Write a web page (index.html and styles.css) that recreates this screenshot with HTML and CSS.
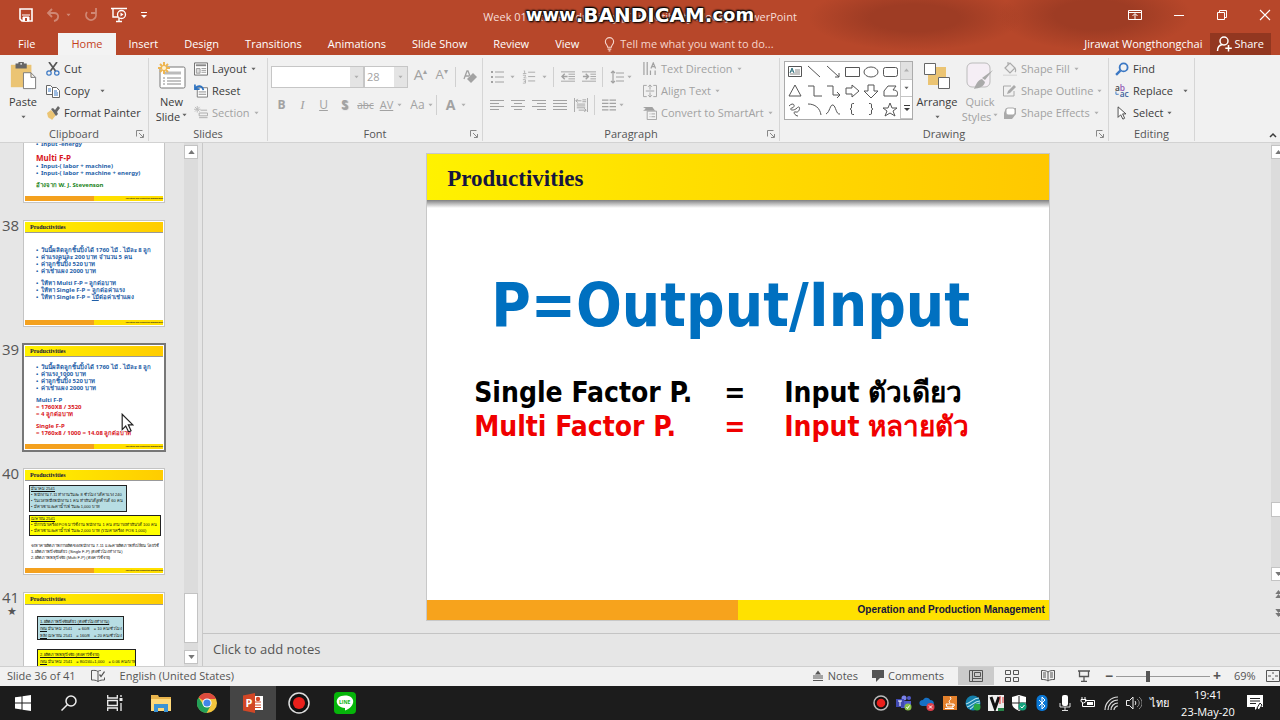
FILE: index.html
```html
<!DOCTYPE html>
<html lang="en">
<head>
<meta charset="utf-8">
<title>Presentation editor</title>
<link rel="stylesheet" href="styles.css">
</head>
<body>
<svg class="sprite" aria-hidden="true">
  <symbol id="caret" viewBox="0 0 6 4"><path d="M.5.5h5L3 3.5z" fill="currentColor"/></symbol>
  <symbol id="launch" viewBox="0 0 8 8"><path d="M.5 6.500V.5h6M3 3l4 4M7.500 4v3.500H4" fill="none" stroke="currentColor"/></symbol>
  <symbol id="save" viewBox="0 0 14 14"><path d="M1 1h12v12H3l-2-2z" fill="none" stroke="currentColor" stroke-width="1.600"/><path d="M3 7h8M4 9h6v4H4z" fill="currentColor" stroke="currentColor"/><path d="M6 10h2v3H6z" fill="#b7472a"/></symbol>
  <symbol id="undo" viewBox="0 0 14 14"><path d="M6 1 2 5l4 4M2 5h6c6 0 5 7 0 8" fill="none" stroke="currentColor" stroke-width="1.800"/></symbol>
  <symbol id="redo" viewBox="0 0 14 14"><path d="M3 4a5 5 0 1 0 8 0M7 5h5V0" fill="none" stroke="currentColor" stroke-width="1.800"/></symbol>
  <symbol id="present" viewBox="0 0 16 16"><path d="M0 1.500h16M2 2v8h5M5 14.500h6M8 11v3" fill="none" stroke="currentColor" stroke-width="1.400"/><circle cx="10.500" cy="7.500" r="4" fill="none" stroke="currentColor" stroke-width="1.300"/><path d="M9.500 5.500v4l3-2z" fill="currentColor"/></symbol>
  <symbol id="qat" viewBox="0 0 8 8"><path d="M1 1.500h6" stroke="currentColor"/><path d="M1 4h6L4 7z" fill="currentColor"/></symbol>
  <symbol id="ribbonopt" viewBox="0 0 14 12"><path d="M.5 1.500h13v9H.5zM.5 3.500h13M7 10V5M4.500 7 7 4.500 9.500 7" fill="none" stroke="currentColor"/></symbol>
  <symbol id="min" viewBox="0 0 12 12"><path d="M1 6.500h10" stroke="currentColor"/></symbol>
  <symbol id="restore" viewBox="0 0 12 12"><path d="M1.500 3.500h7v7h-7zM3.500 3V1.500h7v7H9" fill="none" stroke="currentColor"/></symbol>
  <symbol id="close" viewBox="0 0 12 12"><path d="m1 1 10 10M11 1 1 11" stroke="currentColor" stroke-width="1.100"/></symbol>
  <symbol id="bulb" viewBox="0 0 12 16"><path d="M4 11C4 8.500 1.500 8 1.500 5a4.500 4.500 0 0 1 9 0c0 3-2.500 3.500-2.500 6zM4 13h4M5 15h2" fill="none" stroke="currentColor" stroke-width="1.200"/></symbol>
  <symbol id="person" viewBox="0 0 16 16"><circle cx="8" cy="5" r="4" fill="none" stroke="currentColor" stroke-width="1.500"/><path d="M1.500 15c0-4 2-6 5-6.500M12.500 9v6.500M9.300 12.300h6.500" fill="none" stroke="currentColor" stroke-width="1.500"/></symbol>
  <symbol id="paste" viewBox="0 0 28 30"><path d="M1 3h22v24H1z" fill="#ebc473"/><path d="M6 1.500h3a3 3 0 0 1 6 0h3V7H6z" fill="#666"/><circle cx="12" cy="2" r="1" fill="#eee"/><path d="M14.500 11.500h8l5 5v12h-13zM22.500 11.500v5h5" fill="#fff" stroke="#777"/></symbol>
  <symbol id="cut" viewBox="0 0 14 14"><path d="m3 0 6.500 9M11 0 4.500 9" stroke="#555" stroke-width="1.700"/><circle cx="3" cy="11" r="2.200" fill="none" stroke="#3b78c4" stroke-width="1.200"/><circle cx="10.800" cy="11" r="2.200" fill="none" stroke="#3b78c4" stroke-width="1.200"/></symbol>
  <symbol id="copy" viewBox="0 0 14 14"><path d="M.5 1.500h4l2 2v7h-6zM6.500 3.500h4l3 3v7h-7z" fill="#fff" stroke="#666"/><path d="M2 5h3M2 7h3M8 7h3M8 9h4M8 11h4" stroke="#3b78c4"/></symbol>
  <symbol id="brush" viewBox="0 0 14 14"><path d="M1 7l4-3 5 5-4 5c-1-2-3-1-4-3z" fill="#ebc473"/><path d="m5 3 2-1 2 2 3-4 2 2-3 4 1 2-2 2z" fill="#666"/></symbol>
  <symbol id="newslide" viewBox="0 0 28 28"><rect x="2" y="5" width="25" height="21" rx="1.500" fill="#fff" stroke="#777"/><path d="M6 11h17" stroke="#bbb" stroke-width="3"/><path d="M5 16h2M9 16h14M5 19h2M9 19h14M5 22h2M9 22h14" stroke="#888"/><path d="M6 0v12M0 6h12M2 2l8 8M10 2l-8 8" stroke="#eeb550" stroke-width="2"/><circle cx="6" cy="6" r="2" fill="#fff3d2"/></symbol>
  <symbol id="layout" viewBox="0 0 15 14"><path d="M.5.5h14v13H.5z" fill="#fff" stroke="#666"/><path d="M2 3h11" stroke="#888" stroke-width="2"/><path d="M2.500 6.500h4v5h-4zM8 6.500h5M8 8.500h5M8 10.500h5" fill="#ddd" stroke="#999"/></symbol>
  <symbol id="reset" viewBox="0 0 15 14"><path d="M3.500 3.500h11v10h-11z" fill="#fff" stroke="#777"/><path d="M5 8h8M5 10.500h8" stroke="#888"/><path d="M1 0v5h5M1 5c3-5 8-4 9 1" fill="none" stroke="#2d72c0" stroke-width="1.800"/></symbol>
  <symbol id="section" viewBox="0 0 15 15"><path d="M3.500 0v7M0 3.500h7M1 1l5 5M6 1 1 6" stroke="#bbb"/><path d="M7 4.500h7M5.500 7.500h9v3h-9zM5.500 12.500h9" fill="none" stroke="#aaa"/></symbol>
  <symbol id="bullets" viewBox="0 0 14 14"><path d="M1 2h2M1 7h2M1 12h2" stroke="currentColor" stroke-width="2"/><path d="M5 2h9M5 7h9M5 12h9" stroke="currentColor"/></symbol>
  <symbol id="numbers" viewBox="0 0 14 16"><path d="M1 1h1v3M0 4h4M0 6h3v1L1 9h3M0 11h3v4H0M1 13h2" fill="none" stroke="currentColor" stroke-width=".8"/><path d="M6 2.500h8M6 7.500h8M6 12.500h8" stroke="currentColor"/></symbol>
  <symbol id="dedent" viewBox="0 0 15 13"><path d="M0 1h15M8 3.500h7M8 6h7M8 8.500h7M0 11h15" stroke="currentColor"/><path d="M1 6h6M4 3 1 6l3 3" fill="none" stroke="currentColor" stroke-width="1.500"/></symbol>
  <symbol id="indent" viewBox="0 0 15 13"><path d="M0 1h15M9 3.500h6M9 6h6M9 8.500h6M0 11h15" stroke="currentColor"/><path d="M1 6h6M4 3l3 3-3 3" fill="none" stroke="currentColor" stroke-width="1.500"/></symbol>
  <symbol id="spacing" viewBox="0 0 14 14"><path d="M3 1v12M1 3l2-2 2 2M1 11l2 2 2-2" fill="none" stroke="currentColor" stroke-width="1.200"/><path d="M6 3h8M6 7h8M6 11h8" stroke="currentColor"/></symbol>
  <symbol id="al" viewBox="0 0 14 12"><path d="M0 1.500h14M0 4.500h9M0 7.500h14M0 10.500h9" stroke="currentColor"/></symbol>
  <symbol id="ac" viewBox="0 0 14 12"><path d="M0 1.500h14M3 4.500h8M0 7.500h14M3 10.500h8" stroke="currentColor"/></symbol>
  <symbol id="ar" viewBox="0 0 14 12"><path d="M0 1.500h14M5 4.500h9M0 7.500h14M5 10.500h9" stroke="currentColor"/></symbol>
  <symbol id="aj" viewBox="0 0 14 12"><path d="M0 1.500h14M0 4.500h14M0 7.500h14M0 10.500h14" stroke="currentColor"/></symbol>
  <symbol id="dist" viewBox="0 0 15 15"><path d="M.5 0v15M14.500 0v15M2 3h6M4 1 2 3l2 2M9 2h4M9 4h4M3 6.500h9M3 8.500h9M3 10.500h9M5 13h8M11 11l2 2-2 2" fill="none" stroke="currentColor"/></symbol>
  <symbol id="cols" viewBox="0 0 13 12"><path d="M0 1.500h6M0 4.500h6M0 7.500h6M0 10.500h6M7 1.500h6M7 4.500h6M7 7.500h6M7 10.500h6" stroke="currentColor"/></symbol>
  <symbol id="tdir" viewBox="0 0 15 15"><path d="M1 0v14M4.500 0v14M8 9v5M13 9v5M8.500 7 11 1l2.500 6M9.500 5h3" fill="none" stroke="currentColor" stroke-width="1.300"/></symbol>
  <symbol id="atext" viewBox="0 0 15 15"><path d="M4 1.500H.5v12H4M11 1.500h3.500v12H11M3 7.500h9M7.500 1v5M5.500 3l2-2 2 2M7.500 9v5M5.500 12l2 2 2-2" fill="none" stroke="currentColor"/></symbol>
  <symbol id="smart" viewBox="0 0 15 15"><path d="M0 1h10l3 4H0l3-2z" fill="currentColor"/><path d="M4.500 5.500h10v9h-10zM7 8.500h1M9 8.500h4M7 11.500h1M9 11.500h4" fill="#f3f3f3" stroke="currentColor"/></symbol>
  <symbol id="eraser" viewBox="0 0 14 14"><path d="M1 9 4 1h1l2 5M2 6h4" fill="none" stroke="currentColor" stroke-width="1.300"/><path d="m4 9 6-6 4 4-6 6z" fill="currentColor"/></symbol>
  <symbol id="arrange" viewBox="0 0 26 26"><path d="M12 4h10v10H12zM4 12h10v10H4z" fill="#ebc473"/><path d="M.5.5h11v11H.500zM14.500 14.500h11v11h-11z" fill="#fff" stroke="#666"/></symbol>
  <symbol id="quick" viewBox="0 0 28 28"><rect x="1" y="1" width="23" height="24" rx="5" fill="#f5eef5" stroke="#bbb"/><path d="m27 8-8 10-3-2zM8 27c2-5 4-9 8-10l3 3c-1 5-6 6-11 7z" fill="#aaa"/></symbol>
  <symbol id="fill" viewBox="0 0 14 14"><path d="M0 13.500h14" stroke="#ddd" stroke-width="2"/><path d="M2 6 7 1l5 5-5 5zM5 4V0M12 6c1 2 1 3 0 4" fill="#eee" stroke="#aaa" stroke-width="1.200"/></symbol>
  <symbol id="outline" viewBox="0 0 14 14"><path d="M8 2H.5v10H11V7" fill="none" stroke="#aaa"/><path d="m4 10 1-3 6-6 2 2-6 6z" fill="#aaa"/></symbol>
  <symbol id="effects" viewBox="0 0 14 14"><path d="M3 2h10v6l-4 5H1V7z" fill="#aaa"/><rect x="3" y="2" width="9" height="7" rx="2" fill="#fff" stroke="#aaa"/></symbol>
  <symbol id="find" viewBox="0 0 13 13"><circle cx="8" cy="5" r="3.700" fill="none" stroke="#3b78c4" stroke-width="1.700"/><path d="m5 8-4 4" stroke="#3b78c4" stroke-width="2.200"/></symbol>
  <symbol id="replace" viewBox="0 0 15 15"><text x="0" y="7" font-size="9" font-weight="600" fill="#444">a</text><text x="5" y="7" font-size="9" font-weight="600" fill="#9159b5">b</text><text x="5" y="14" font-size="9" font-weight="600" fill="#3b5f9c">ac</text><path d="M1 8v3h3" fill="none" stroke="#3b78c4"/></symbol>
  <symbol id="pointer" viewBox="0 0 11 16"><path d="M1 1v12l3-3 2.500 5 2-1-2.300-5H10z" fill="#fff" stroke="currentColor"/></symbol>
  <symbol id="up" viewBox="0 0 8 5"><path d="M0 5h8L4 0z" fill="currentColor"/></symbol>
  <symbol id="down" viewBox="0 0 8 5"><path d="M0 0h8L4 5z" fill="currentColor"/></symbol>
  <symbol id="chev" viewBox="0 0 8 6"><path d="m1 5 3-3 3 3" fill="none" stroke="currentColor" stroke-width="1.500"/></symbol>
  <symbol id="book" viewBox="0 0 14 13"><path d="M7 2C5 .5 3 1 .5 1v9.500C3 10.500 5 10.500 7 12V2c1-1 2-1 3-1M7 12c2-1.500 4-1.500 6.500-1.500V8" fill="none" stroke="currentColor"/><path d="m8.500 5 1.500 2 3.500-5" fill="none" stroke="currentColor" stroke-width="1.300"/></symbol>
  <symbol id="notes" viewBox="0 0 12 11"><path d="M3 4h6L6 0z" fill="currentColor"/><path d="M1 5.500h10M1 7.500h10M1 10h10" stroke="currentColor"/></symbol>
  <symbol id="comment" viewBox="0 0 12 12"><path d="M0 0h12v8H8l-4 4V8H0z" fill="currentColor"/></symbol>
  <symbol id="vnormal" viewBox="0 0 14 12"><path d="M.5.500h13v11H.5zM3.500 1v10M3.500 8.500h9M5.500 2.500h6v4h-6z" fill="none" stroke="currentColor"/></symbol>
  <symbol id="vsort" viewBox="0 0 14 12"><path d="M.5.500h5v4h-5zM8.500.5h5v4h-5zM.5 7.500h5v4h-5zM8.500 7.500h5v4h-5z" fill="none" stroke="currentColor"/></symbol>
  <symbol id="vread" viewBox="0 0 14 12"><path d="M7 2C5 .5 3 .5 .5 .5v9C3 9.500 5 9.500 7 11c2-1.500 4-1.500 6.500-1.500v-9C11 .5 9 .5 7 2v9M2 3h3M2 5h3M2 7h3M9 3h3M9 5h3M9 7h3" fill="none" stroke="currentColor"/></symbol>
  <symbol id="vshow" viewBox="0 0 12 12"><path d="M0 1h12M1.500 1v5.500h9V1M6 7v4M3 11.500h6" fill="none" stroke="currentColor" stroke-width="1.300"/></symbol>
  <symbol id="fit" viewBox="0 0 14 12"><path d="M.5.500h13v11H.5z" fill="none" stroke="currentColor"/><path d="M7 2v2M7 8v2M2 6h3M9 6h3" fill="none" stroke="currentColor"/></symbol>
</svg>

<div class="app">
  <header class="top">
    <div class="titlebar">
      <div class="qat">
        <button aria-label="Save"><svg class="i14"><use href="#save"/></svg></button>
        <button class="faded" aria-label="Undo"><svg class="i14"><use href="#undo"/></svg><svg class="caret"><use href="#caret"/></svg></button>
        <button class="faded" aria-label="Redo"><svg class="i14"><use href="#redo"/></svg></button>
        <button aria-label="Start from beginning"><svg class="i16"><use href="#present"/></svg></button>
        <button aria-label="Customize toolbar"><svg class="i8"><use href="#qat"/></svg></button>
      </div>
      <div class="doc-title">Week 01 Intro Productivity [Compatibility Mode] - PowerPoint<span class="watermark"><small>www</small>.BANDICAM.<small>com</small></span></div>
      <div class="window-buttons">
        <button aria-label="Ribbon options"><svg class="i14"><use href="#ribbonopt"/></svg></button>
        <button aria-label="Minimize"><svg class="i12"><use href="#min"/></svg></button>
        <button aria-label="Restore"><svg class="i12"><use href="#restore"/></svg></button>
        <button aria-label="Close"><svg class="i12"><use href="#close"/></svg></button>
      </div>
    </div>
    <nav class="tabs">
      <button class="file">File</button>
      <button class="active">Home</button>
      <button>Insert</button>
      <button>Design</button>
      <button>Transitions</button>
      <button>Animations</button>
      <button>Slide Show</button>
      <button>Review</button>
      <button>View</button>
      <button class="tell"><svg class="bulb"><use href="#bulb"/></svg>Tell me what you want to do...</button>
      <span class="user">Jirawat Wongthongchai</span>
      <button class="share"><svg class="i16"><use href="#person"/></svg>Share</button>
    </nav>
  </header>

  <section class="ribbon">
    <div class="group clipboard">
      <div class="body">
        <button class="big"><svg class="i28"><use href="#paste"/></svg><span>Paste</span><svg class="caret"><use href="#caret"/></svg></button>
        <div class="stack">
          <button><svg class="i14"><use href="#cut"/></svg>Cut</button>
          <button><svg class="i14"><use href="#copy"/></svg>Copy<svg class="caret far"><use href="#caret"/></svg></button>
          <button><svg class="i14"><use href="#brush"/></svg>Format Painter</button>
        </div>
      </div>
      <div class="label">Clipboard<svg class="i8 launch"><use href="#launch"/></svg></div>
    </div>
    <div class="group slides">
      <div class="body">
        <button class="big"><svg class="i28"><use href="#newslide"/></svg><span>New</span><span>Slide<svg class="caret"><use href="#caret"/></svg></span></button>
        <div class="stack">
          <button><svg class="i14"><use href="#layout"/></svg>Layout<svg class="caret"><use href="#caret"/></svg></button>
          <button><svg class="i14"><use href="#reset"/></svg>Reset</button>
          <button class="off"><svg class="i14"><use href="#section"/></svg>Section<svg class="caret"><use href="#caret"/></svg></button>
        </div>
      </div>
      <div class="label">Slides</div>
    </div>
    <div class="group font">
      <div class="body tworows off">
        <div class="row">
          <div class="combo"><select class="face" aria-label="Font"><option></option></select><span><svg class="caret"><use href="#caret"/></svg></span></div>
          <div class="combo"><select class="size" aria-label="Font size"><option>28</option></select><span><svg class="caret"><use href="#caret"/></svg></span></div>
          <button class="tool glyph">A<sup>▴</sup></button>
          <button class="tool glyph small">A<sup>▾</sup></button>
          <i class="sep"></i>
          <button class="tool" aria-label="Clear formatting"><svg class="i14"><use href="#eraser"/></svg></button>
        </div>
        <div class="row">
          <button class="tool"><b>B</b></button>
          <button class="tool"><em>I</em></button>
          <button class="tool"><u>U</u></button>
          <button class="tool shadow"><b>S</b></button>
          <button class="tool"><s>abc</s></button>
          <button class="tool spaced">AV</button>
          <svg class="caret"><use href="#caret"/></svg>
          <button class="tool case">Aa</button>
          <svg class="caret"><use href="#caret"/></svg>
          <i class="sep"></i>
          <button class="tool color"><b>A</b></button>
          <svg class="caret"><use href="#caret"/></svg>
        </div>
      </div>
      <div class="label">Font<svg class="i8 launch"><use href="#launch"/></svg></div>
    </div>
    <div class="group paragraph">
      <div class="body off">
        <div class="tworows">
          <div class="row">
            <button class="tool" aria-label="Bullets"><svg class="i14"><use href="#bullets"/></svg></button><svg class="caret wide"><use href="#caret"/></svg>
            <button class="tool" aria-label="Numbering"><svg class="i14"><use href="#numbers"/></svg></button><svg class="caret wide"><use href="#caret"/></svg>
            <i class="sep"></i>
            <button class="tool" aria-label="Decrease indent"><svg class="i14"><use href="#dedent"/></svg></button>
            <button class="tool" aria-label="Increase indent"><svg class="i14"><use href="#indent"/></svg></button>
            <i class="sep"></i>
            <button class="tool" aria-label="Line spacing"><svg class="i14"><use href="#spacing"/></svg></button><svg class="caret"><use href="#caret"/></svg>
          </div>
          <div class="row">
            <button class="tool" aria-label="Align left"><svg class="i14"><use href="#al"/></svg></button>
            <button class="tool" aria-label="Center"><svg class="i14"><use href="#ac"/></svg></button>
            <button class="tool" aria-label="Align right"><svg class="i14"><use href="#ar"/></svg></button>
            <button class="tool" aria-label="Justify"><svg class="i14"><use href="#aj"/></svg></button>
            <button class="tool" aria-label="Distribute"><svg class="i14"><use href="#dist"/></svg></button>
            <i class="sep"></i>
            <button class="tool" aria-label="Columns"><svg class="i14"><use href="#cols"/></svg></button><svg class="caret"><use href="#caret"/></svg>
          </div>
        </div>
        <div class="stack">
          <button><svg class="i14"><use href="#tdir"/></svg>Text Direction<svg class="caret"><use href="#caret"/></svg></button>
          <button><svg class="i14"><use href="#atext"/></svg>Align Text<svg class="caret"><use href="#caret"/></svg></button>
          <button><svg class="i14"><use href="#smart"/></svg>Convert to SmartArt<svg class="caret"><use href="#caret"/></svg></button>
        </div>
      </div>
      <div class="label">Paragraph<svg class="i8 launch"><use href="#launch"/></svg></div>
    </div>
    <div class="group drawing">
      <div class="body">
        <div class="gallery">
          <svg class="shapes" viewBox="0 0 115 57" fill="none" stroke="#555">
            <path d="M3.500 4.500h13v10h-13z"/><path d="M10 8h5M10 10h5M5 12h10" stroke="#888"/><path d="m5 11 2-5 2 5M6 9h2" stroke="#2a6b78"/>
            <path d="m23 4 12 11M42 4l12 11M54 11v4h-4M60.500 5.500h14v9h-14z"/><ellipse cx="86" cy="10" rx="7" ry="5"/><rect x="98.500" y="5.500" width="14" height="9" rx="2"/>
            <path d="m10 23-6 11h12zM23 24h6v10h8M42 24h6v9h7M52 30l3 3-3 3M61 26h6v-3l7 6-7 6v-3h-6zM83 23h6v6h4l-7 7-7-7h4zM99 34v-5l4-5h8l-3 4c5 0 5 3 4 6z"/>
            <path d="M4 44c5-5 7 1 3 2s1 4 5 0 3 5-1 4-1 4 2 4M23 42c7 0 12 4 13 11M41 52c4-2 4-10 7-9s3 10 7 9M69 41.500h-1.500q-1 0-1 1.500v3l-1.500 1 1.500 1v3q0 1.500 1 1.500H69M84 41.500h1.500q1 0 1 1.500v3l1.500 1-1.500 1v3q0 1.500-1 1.500H84M105 41l2 5h5l-4 3 2 5-5-3-5 3 2-5-4-3h5z"/>
          </svg>
          <div class="gallery-nav"><button aria-label="Scroll up" class="off"><svg class="caret"><use href="#up"/></svg></button><button aria-label="Scroll down"><svg class="caret"><use href="#caret"/></svg></button><button aria-label="More shapes"><svg class="i8"><use href="#qat"/></svg></button></div>
        </div>
        <button class="big arrange"><svg class="i26"><use href="#arrange"/></svg><span>Arrange</span><svg class="caret"><use href="#caret"/></svg></button>
        <button class="big off quick"><svg class="i28"><use href="#quick"/></svg><span>Quick</span><span>Styles<svg class="caret"><use href="#caret"/></svg></span></button>
        <div class="stack off">
          <button><svg class="i14"><use href="#fill"/></svg>Shape Fill<svg class="caret"><use href="#caret"/></svg></button>
          <button><svg class="i14"><use href="#outline"/></svg>Shape Outline<svg class="caret"><use href="#caret"/></svg></button>
          <button><svg class="i14"><use href="#effects"/></svg>Shape Effects<svg class="caret"><use href="#caret"/></svg></button>
        </div>
      </div>
      <div class="label">Drawing<svg class="i8 launch"><use href="#launch"/></svg></div>
    </div>
    <div class="group editing">
      <div class="body">
        <div class="stack">
          <button><svg class="i14"><use href="#find"/></svg>Find</button>
          <button><svg class="i14"><use href="#replace"/></svg>Replace<svg class="caret far"><use href="#caret"/></svg></button>
          <button><svg class="i14"><use href="#pointer"/></svg>Select<svg class="caret"><use href="#caret"/></svg></button>
        </div>
      </div>
      <div class="label">Editing</div>
    </div>
    <button class="collapse" aria-label="Collapse ribbon"><svg class="i8"><use href="#chev"/></svg></button>
  </section>

  <main class="work">
    <aside class="thumbs">
      <ol class="thumb-list">
        <li><span class="num"></span>
          <div class="thumb">
            <div class="t-body low"><p class="dot">Input -energy</p><p class="gap"></p><p class="red large">Multi F-P</p><p class="dot">Input-( labor + machine)</p><p class="dot">Input-( labor + machine + energy)</p><p class="gap"></p><p class="green">อ้างจาก W. J. Stevenson</p></div>
            <div class="t-foot"><span>Operation and Production Management</span></div></div></li>
        <li><span class="num">38</span>
          <div class="thumb"><div class="t-head">Productivities</div>
            <div class="t-body mid"><p class="dot">วันนี้ผลิตลูกชิ้นปิ้งได้ 1760 ไม้ . ไม้ละ 8 ลูก</p><p class="dot">ค่าแรงคนละ 200 บาท จำนวน 5 คน</p><p class="dot">ค่าลูกชิ้นปิ้ง 520 บาท</p><p class="dot">ค่าเช่าแผง 2000 บาท</p><p class="gap"></p><p class="dot">ให้หา Multi F-P = ลูกต่อบาท</p><p class="dot">ให้หา Single F-P = ลูกต่อค่าแรง</p><p class="dot">ให้หา Single F-P = <u>ไม้</u>ต่อค่าเช่าแผง</p></div>
            <div class="t-foot"><span>Operation and Production Management</span></div></div></li>
        <li><span class="num">39</span>
          <div class="thumb selected"><div class="t-head">Productivities</div>
            <div class="t-body"><p class="dot">วันนี้ผลิตลูกชิ้นปิ้งได้ 1760 ไม้ . ไม้ละ 8 ลูก</p><p class="dot">ค่าแรง 1000 บาท</p><p class="dot">ค่าลูกชิ้นปิ้ง 520 บาท</p><p class="dot">ค่าเช่าแผง 2000 บาท</p><p class="gap"></p><p>Multi F-P</p><p class="red">= 1760X8 / 3520</p><p class="red">= 4 ลูกต่อบาท</p><p class="gap"></p><p class="red">Single F-P</p><p class="red">= 1760x8 / 1000 = 14.08 ลูกต่อบาท</p></div>
            <div class="t-foot"><span>Operation and Production Management</span></div></div></li>
        <li><span class="num">40</span>
          <div class="thumb"><div class="t-head">Productivities</div>
            <div class="t-notes">
              <div class="box blue"><p><u>มีนาคม 2541</u></p><p>• พนักงาน 7-11 ทำงานวันละ 8 ชั่วโมง ได้ค่าแรง 240</p><p>• ในเวลาหนึ่งพนักงาน 1 คน ทำเงินได้ลูกค้าได้ 60 คน</p><p>• มีค่าเช่าและค่าน้ำไฟ วันละ 1,000 บาท</p></div>
              <div class="box yellow"><p><u>เมษายน 2541</u></p><p>• มีการนำเครื่อง POS มาใช้งาน พนักงาน 1 คน สามารถทำเงินได้ 100 คน</p><p>• มีค่าเช่าและค่าน้ำไฟ วันละ 2,000 บาท (รวมค่าเครื่อง POS 1,000)</p></div>
              <div class="plain"><p>จงหาค่าผลิตภาพการผลิตของพนักงาน 7-11 และค่าผลิตภาพที่เปลี่ยน โดยใช้</p><p>1. ผลิตภาพปัจจัยเดียว (Single F-P) (ต่อชั่วโมงทำงาน)</p><p>2. ผลิตภาพพหุปัจจัย (Multi F-P) (ต่อค่าใช้จ่าย)</p></div>
            </div>
            <div class="t-foot"><span>Operation and Production Management</span></div></div></li>
        <li><span class="num">41<br><span class="star">★</span></span>
          <div class="thumb"><div class="t-head">Productivities</div>
            <div class="t-notes inset">
              <div class="box blue"><p><u>1. ผลิตภาพปัจจัยเดียว (ต่อชั่วโมงทำงาน)</u></p><p><u>ก่อน</u> มีนาคม 2541 &emsp; = 60/8 &ensp; = 10 คน/ชั่วโมง</p><p><u>หลัง</u> เมษายน 2541 &ensp; = 160/8 &ensp; = 20 คน/ชั่วโมง</p></div>
              <div class="box yellow"><p><u>2. ผลิตภาพพหุปัจจัย (ต่อค่าใช้จ่าย)</u></p><p><u>ก่อน</u> มีนาคม 2541 &ensp; = 80/240+1,000 &ensp; = 0.06 คน/บาท</p></div>
            </div>
            <div class="t-foot"></div></div></li>
      </ol>
      <div class="scrollbar"><button aria-label="Scroll up"><svg class="tri"><use href="#up"/></svg></button><div class="track"><div class="handle"></div></div><button aria-label="Scroll down"><svg class="tri"><use href="#down"/></svg></button></div>
      <svg class="cursor" viewBox="0 0 11 16"><path d="M1 1v13l3-3 2.500 5 2-1-2.300-5H10z" fill="#fff" stroke="#222"/></svg>
    </aside>
    <section class="editor">
      <div class="canvas-row">
        <div class="canvas">
          <article class="slide">
            <h2 class="s-head">Productivities</h2>
            <div class="s-body">
              <h1>P=Output/Input</h1>
              <div class="factors">
                <span>Single Factor P.</span><span>=</span><span>Input ตัวเดียว</span>
                <span class="hot">Multi Factor P.</span><span class="hot">=</span><span class="hot">Input หลายตัว</span>
              </div>
            </div>
            <footer class="s-foot"><span>Operation and Production Management</span></footer>
          </article>
        </div>
        <div class="edge-bar">
          <button aria-label="Scroll up"><svg class="tri"><use href="#up"/></svg></button>
          <div class="track"><div class="handle"></div></div>
          <button aria-label="Scroll down"><svg class="tri"><use href="#down"/></svg></button>
          <div class="jump">
            <button aria-label="Previous slide"><svg class="tri"><use href="#up"/></svg><svg class="tri"><use href="#up"/></svg></button>
            <button aria-label="Next slide"><svg class="tri"><use href="#down"/></svg><svg class="tri"><use href="#down"/></svg></button>
          </div>
        </div>
      </div>
      <div class="notes">Click to add notes</div>
    </section>
  </main>

  <div class="status">
    <span>Slide 36 of 41</span>
    <svg class="i14 book"><use href="#book"/></svg>
    <span>English (United States)</span>
    <div class="status-right">
      <button class="words"><svg class="i12"><use href="#notes"/></svg>Notes</button>
      <button class="words"><svg class="i12"><use href="#comment"/></svg>Comments</button>
      <button class="view on" aria-label="Normal"><svg class="i14"><use href="#vnormal"/></svg></button>
      <button class="view" aria-label="Slide sorter"><svg class="i14"><use href="#vsort"/></svg></button>
      <button class="view" aria-label="Reading view"><svg class="i14"><use href="#vread"/></svg></button>
      <button class="view" aria-label="Slide show"><svg class="i12"><use href="#vshow"/></svg></button>
      <button class="zoom-step" aria-label="Zoom out">−</button>
      <input class="zoom" type="range" min="0" max="100" value="33" aria-label="Zoom">
      <button class="zoom-step" aria-label="Zoom in">+</button>
      <span class="pct">69%</span>
      <button class="fit" aria-label="Fit slide"><svg class="i14"><use href="#fit"/></svg></button>
    </div>
  </div>

  <footer class="taskbar">
    <button aria-label="Start"><svg class="i16" viewBox="0 0 16 16"><path d="M0 2.300 6.500 1.400v6H0zM7.500 1.200 16 0v7.400H7.500zM0 8.400h6.500v6L0 13.500zM7.500 8.400H16V16l-8.500-1.200z" fill="#fff"/></svg></button>
    <button aria-label="Search"><svg class="i16" viewBox="0 0 16 16" fill="none" stroke="#eee" stroke-width="1.500"><circle cx="10" cy="6" r="5"/><path d="m6.500 9.500-6 6"/></svg></button>
    <button aria-label="Task view"><svg class="i16" viewBox="0 0 16 16" fill="none" stroke="#eee" stroke-width="1.300"><path d="M.7 0v3h9.600V0M.7 5.500h9.600v5H.7zM.7 16v-3h9.600v3M14 0v2M14 8v8"/><path d="M12.500 4.500h3" stroke-width="3"/></svg></button>
    <button aria-label="File Explorer"><svg class="i20" viewBox="0 0 20 20"><path d="M0 2h7l1 2h12v14H0z" fill="#e9b44c"/><path d="M0 6h20v12H0z" fill="#ffd97a"/><path d="M3 11h14v8h-4v-4H7v4H3z" fill="#3c93d3"/></svg></button>
    <button aria-label="Chrome"><svg class="i20" viewBox="0 0 20 20"><circle cx="10" cy="10" r="10" fill="#f4c63d"/><path d="M10 10 1.500 4.500A10 10 0 0 1 19 6H10z" fill="#dd4b3e"/><path d="M1.500 4.500A10 10 0 0 0 9.500 20l4-7L10 10l-3.500 2z" fill="#23a058"/><circle cx="10" cy="10" r="4.600" fill="#fff"/><circle cx="10" cy="10" r="3.600" fill="#4285e8"/></svg></button>
    <button class="current" aria-label="PowerPoint"><svg class="i20" viewBox="0 0 20 20"><path d="M10 3h10v14H10z" fill="#fff"/><path d="M12 9h6M12 12h6M12 14.500h6" stroke="#d24726"/><circle cx="15" cy="6" r="2.200" fill="#d24726"/><path d="M0 2.500 12 0v20L0 17.500z" fill="#d24726"/><text x="2.500" y="14" font-size="11" font-weight="700" fill="#fff">P</text></svg></button>
    <button aria-label="Recorder"><svg class="i22" viewBox="0 0 22 22"><circle cx="11" cy="11" r="10" fill="#111" stroke="#ddd" stroke-width="1.500"/><circle cx="11" cy="11" r="6" fill="#e9201c"/></svg></button>
    <button aria-label="LINE"><svg class="i22" viewBox="0 0 22 22"><rect width="22" height="22" rx="4" fill="#06b50a"/><path d="M11 3.500c11 0 11 11 0 15v-2.500c-11-1-11-12.500 0-12.500z" fill="#fff"/><text x="5" y="12" font-size="5" font-weight="700" fill="#06b50a">LINE</text></svg></button>
    <div class="tray">
      <svg class="i16" viewBox="0 0 16 16"><circle cx="8" cy="8" r="7" fill="#111" stroke="#bbb" stroke-width="1.500"/><circle cx="8" cy="8" r="4.300" fill="#e9201c"/></svg>
      <svg class="i16" viewBox="0 0 16 16"><circle cx="8" cy="3" r="2.500" fill="#7b83eb"/><circle cx="13" cy="3" r="2" fill="#5059c9"/><path d="M5 6h10v7H5z" fill="#5059c9"/><path d="M0 4h8v8H0z" fill="#4049b0"/><path d="M2 6h4M4 6v5" stroke="#fff"/><circle cx="12" cy="12" r="3.500" fill="#8ac249"/><path d="m10.500 12 1 1.500 2-3" fill="none" stroke="#fff"/></svg>
      <svg class="i16" viewBox="0 0 16 16"><path d="M1 10c-2-4 2-5 3-5 2-4 7-2 7 0 5 0 5 6 1 6H3z" fill="#1670c4"/><circle cx="11.500" cy="12" r="4" fill="#df3f4a"/><path d="m10 10.500 3 3M13 10.500l-3 3" stroke="#fff"/></svg>
      <svg class="i16" viewBox="0 0 16 16"><rect x="1" y="1" width="14" height="14" fill="#e4812c"/><path d="M8 2c3 3-3 3 0 6M4 9h7v3H5zM3 13.500h9M11 9c3 0 1 3-1 3" fill="none" stroke="#fff"/></svg>
      <svg class="i16" viewBox="0 0 16 16"><circle cx="8" cy="8" r="7.500" fill="#137eaa"/><path d="M1 9c5-1 7-6 13-6M2 12c5-1 7-6 13-6M5 14c4-2 5-6 10-6" fill="none" stroke="#b2e3ef" stroke-width="1.200"/><circle cx="12" cy="12" r="3.500" fill="#28a745"/></svg>
      <svg class="i16" viewBox="0 0 16 16"><path d="M0 0h16v16H0z" fill="#eee"/><path d="m3 2 4 11 4-11" fill="none" stroke="#111" stroke-width="3"/><path d="M12 1v8M15 2v6" stroke="#d33"/><path d="M10 13h6v3h-6z" fill="#27854a"/></svg>
      <svg class="i16" viewBox="0 0 16 16"><path d="m8 0 7 2v6c0 4-3 6-7 8-4-2-7-4-7-8V2z" fill="#fff"/><path d="M8 1v14M1 8h14" stroke="#222"/><circle cx="11.500" cy="11.500" r="4" fill="#13a37d"/><path d="m9.500 11.500 1.500 1.500 2.500-3" fill="none" stroke="#fff"/></svg>
      <svg class="i16" viewBox="0 0 16 16"><rect x="2.500" width="11" height="16" rx="5" fill="#0a78d7"/><path d="m5 5 6 6-3 3V2l3 3-6 6" fill="none" stroke="#fff"/></svg>
      <svg class="i16" viewBox="0 0 16 16"><rect x="5" y="0" width="6" height="11" rx="2" fill="#fff"/><path d="M3 8v4h10V8M8 12v3M5 15.500h6" fill="none" stroke="#ddd"/></svg>
      <svg class="i16" viewBox="0 0 16 16"><path d="M5 5.500h9.500v6H2.500V8M2 2v3M5 2v3M1 4.500h5v2L3.500 8 1 6.500z" fill="none" stroke="#fff"/><path d="M7 7h6v3H7z" fill="#fff"/></svg>
      <svg class="i16" viewBox="0 0 16 16" fill="none" stroke="#ddd" stroke-width="1.200"><path d="M2 15C2 8 8 2 15 2M5 15c0-5 4-10 10-10M8 15c0-4 3-7 7-7M11 15c0-2 2-4 4-4"/></svg>
      <svg class="i16" viewBox="0 0 16 16" fill="none" stroke="#eee"><path d="M.5 5.500h3L7 2v12l-3.500-3.500h-3zM9 6c1 1 1 3 0 4"/><path d="M11 4c3 2 3 6 0 8M13 2c4 3 4 9 0 12" stroke="#888"/></svg>
      <span class="lang">ไทย</span>
      <span class="clock">19:41<br>23-May-20</span>
      <svg class="i16" viewBox="0 0 16 16"><path d="M0 0h16v12h-5l-3 3v-3H0z" fill="#fff"/><path d="M3 3.500h10M3 6h10M3 8.500h6" stroke="#222"/><path d="m10 13 3-5 2 2-3 5z" fill="#fff" stroke="#222"/></svg>
    </div>
  </footer>
</div>
</body>
</html>
```

FILE: styles.css
```css
* { box-sizing: border-box; }
body { margin: 0; font: 11px/14px "Open Sans", "Noto Sans", sans-serif; color: #3b3b3b; background: #e6e6e6; }
button { font: inherit; color: inherit; background: none; border: 0; padding: 0; display: inline-flex; align-items: center; justify-content: center; white-space: nowrap; }
p, h1, h2, ol { margin: 0; padding: 0; }
svg { flex: none; display: block; }
.sprite { position: absolute; width: 0; height: 0; }
.i8 { width: 8px; height: 8px; }
.i12 { width: 12px; height: 12px; }
.i14 { width: 14px; height: 14px; }
.i16 { width: 16px; height: 16px; }
.i20 { width: 20px; height: 20px; }
.i22 { width: 22px; height: 22px; }
.i26 { width: 26px; height: 28px; }
.i28 { width: 28px; height: 28px; }
.caret { width: 5px; height: 4px; color: #666; }
.app { height: 100vh; display: flex; flex-direction: column; overflow: hidden; }

/* Title bar and tabs */
.top { color: #fff; background: radial-gradient(ellipse at center, #9e3c24 30%, #9e3c2400 72%) 1000px -20px / 190px 70px no-repeat, radial-gradient(ellipse at center, #9e3c24 30%, #9e3c2400 72%) 810px -14px / 210px 64px no-repeat, #b7472a; }
.titlebar { height: 33px; display: grid; grid-template-columns: 1fr auto 1fr; align-items: center; }
.qat { display: flex; align-items: center; gap: 13px; padding-left: 19px; padding-bottom: 3px; }
.qat button { gap: 6px; }
.faded { opacity: .35; }
.qat .caret { color: #fff; }
.doc-title { position: relative; color: #f6ded8; }
.watermark { position: absolute; inset: -3px 0 0 0; display: flex; justify-content: center; align-items: center; color: #fff; font: bold 20px/20px "DejaVu Sans", sans-serif; text-shadow: 0 0 2px #000, 1px 1px 2px #000, -1px -1px 2px #000, 1px -1px 1px #222; }
.watermark small { font-size: 18px; }
.window-buttons { display: flex; justify-content: flex-end; gap: 31px; padding: 0 9px 4px 0; }
.tabs { height: 22px; display: flex; align-items: stretch; }
.tabs button { padding: 0 13px; }
.tabs .file { padding: 0 23px 0 18px; }
.tabs .active { color: #c43e1c; background: #f3f3f3; }
.tabs .tell { gap: 5px; color: #f6d5cc; padding-left: 12px; }
.bulb { width: 11px; height: 15px; }
.user { margin-left: auto; align-self: center; padding-right: 8px; }
.tabs .share { background: #923720; padding: 0 7px 0 6px; gap: 2px; margin-right: 9px; }

/* Ribbon */
.ribbon { height: 88px; flex: none; display: flex; background: #f1f1f1; border-bottom: 1px solid #d2d2d2; padding-top: 3px; }
.group { display: flex; flex-direction: column; flex: none; border-right: 1px solid #d6d6d6; margin-bottom: 1px; }
.body { display: flex; flex: 1; }
.off { color: #a2a2a2; }
.off .caret { color: #b0b0b0; }
.label { position: relative; text-align: center; height: 14px; color: #555; }
.launch { position: absolute; right: 4px; top: 3px; color: #888; }
.stack { display: flex; flex-direction: column; }
.stack button { height: 22px; justify-content: flex-start; gap: 4px; }
.far { margin-left: 6px; }
.big { flex-direction: column; justify-content: flex-start; padding-top: 4px; line-height: 15px; }
.big svg:first-child { margin-bottom: 4px; }
.big > .caret { margin-top: 6px; }
.big span { display: flex; align-items: center; gap: 2px; }
.clipboard { width: 149px; }
.clipboard .big { width: 46px; }
.slides { width: 119px; }
.slides .big { width: 45px; }
.font { width: 215px; }
.paragraph { width: 297px; }
.drawing { width: 329px; }
.editing { width: 86px; }
.tworows { display: flex; flex-direction: column; padding: 8px 0 0 3px; gap: 6px; }
.row { display: flex; align-items: center; height: 22px; }
.tool { width: 21px; height: 20px; font-size: 12px; }
.tool em { font-family: "Liberation Serif", serif; font-size: 13px; }
.glyph { font-size: 15px; align-items: baseline; margin-left: 2px; }
.glyph.small { font-size: 13px; margin-left: 0; }
.glyph sup { font-size: 8px; line-height: 8px; align-self: flex-start; }
.shadow { text-shadow: 1px 1px 1px #999; }
.tool s { font-size: 10px; }
.spaced { text-decoration: underline; font-size: 11px; }
.case { margin-left: 5px; }
.color { font-size: 14px; }
.sep { width: 1px; height: 20px; background: #d0d0d0; margin: 0 3px; }
.wide { margin: 0 3px; }
.combo { display: flex; border: 1px solid #c6c6c6; height: 22px; background: #fff; }
.combo select { appearance: none; border: 0; background: none; padding: 0 2px; font: inherit; color: #a2a2a2; }
.combo span { width: 13px; display: flex; align-items: center; justify-content: center; background: #e4e4e4; }
.face { width: 78px; }
.size { width: 29px; }
.paragraph .tworows { width: 160px; flex: none; }
.gallery { display: flex; width: 129px; height: 59px; margin: 3px 0 0 4px; border: 1px solid #ababab; background: #fff; }
.shapes { width: 115px; height: 57px; }
.gallery-nav { flex: 1; display: grid; border-left: 1px solid #c6c6c6; }
.gallery-nav button { border-bottom: 1px solid #c6c6c6; }
.gallery-nav .off { background: #e1e1e1; }
.drawing .big { width: 48px; }
.drawing .quick { width: 38px; }
.drawing .stack { padding-left: 4px; }
.editing .stack { padding-left: 6px; }
.collapse { margin: auto 3px 3px auto; }

/* Thumbnails */
.work { flex: 1; min-height: 0; display: flex; }
.thumbs { position: relative; width: 203px; flex: none; display: flex; overflow: hidden; border-right: 1px solid #c8c8c8; }
.thumb-list { width: 184px; list-style: none; margin-top: -47px; }
.thumb-list li { display: flex; height: 124px; }
.num { width: 23px; padding-left: 2px; font-size: 15px; line-height: 10px; color: #555; }
.star { font-size: 11px; padding-left: 5px; line-height: 18px; }
.thumb { width: 142px; height: 107px; border: 1px solid #c4c4c4; background: #fff; padding: 1px; display: flex; flex-direction: column; overflow: hidden; font: bold 6px/7px "Noto Sans", sans-serif; color: #1f5fa8; white-space: nowrap; }
.selected { outline: 1px solid #777; border-color: #777; }
.t-head { height: 11px; flex: none; background: linear-gradient(90deg, #fff200, #fc0); border-bottom: 1px solid #999; color: #101040; font: bold 6px/11px "Liberation Serif", serif; padding-left: 5px; }
.t-body { flex: 1; min-height: 0; padding: 7px 0 0 11px; }
.t-body.mid { padding-top: 14px; }
.t-body.low { padding-top: 43px; }
.dot::before { content: "•"; display: inline-block; width: 5px; }
.gap { height: 5px; }
.red { color: #d9151c; }
.large { font-size: 8px; line-height: 10px; }
.green { color: #208320; }
.t-foot { height: 5px; flex: none; display: flex; justify-content: flex-end; background: linear-gradient(90deg, #f4a11e 50%, #ffdf00 50%); color: #222; font: bold 2px/5px "Liberation Sans", sans-serif; }
.t-notes { flex: 1; min-height: 0; color: #111; font: 4px/6px "Liberation Sans", "Noto Sans", sans-serif; padding: 4px 4px 0; display: flex; flex-direction: column; align-items: flex-start; gap: 3px; }
.t-notes .box { border: 1px solid #222; padding: 0 1px; flex: none; }
.t-notes .blue { background: #b7dde3; width: 98px; height: 27px; }
.t-notes .yellow { background: #ff0; width: 132px; height: 21px; }
.plain { padding: 4px 0 0 2px; width: 132px; }
.inset { padding: 11px 12px 0; gap: 9px; }
.t-notes.inset .blue { width: 87px; height: 24px; padding: 1px 2px; line-height: 7px; }
.t-notes.inset .yellow { width: 99px; height: 24px; padding: 1px 2px; line-height: 7px; }
.scrollbar { width: 14px; background: #dcdcdc; display: flex; flex-direction: column; padding: 2px 0; color: #777; }
.scrollbar button, .edge-bar > button { height: 14px; background: #fff; border: 1px solid #c3c3c3; }
.tri { width: 7px; height: 4px; }
.track { flex: 1; display: flex; flex-direction: column; justify-content: flex-end; padding-bottom: 7px; }
.handle { height: 50px; background: #fff; border: 1px solid #c3c3c3; }
.cursor { position: absolute; left: 121px; top: 270px; width: 13px; height: 19px; }

/* Slide editor */
.editor { flex: 1; min-width: 0; display: flex; flex-direction: column; }
.canvas-row { flex: 1; min-height: 0; display: flex; }
.canvas { flex: 1; display: flex; align-items: center; justify-content: center; padding: 0 0 2px 2px; }
.slide { width: 58.5%; aspect-ratio: 4 / 3; display: flex; flex-direction: column; background: #fff; border: 1px solid #c8c8c8; }
.s-head { height: 46px; padding-left: 20px; background: linear-gradient(90deg, #fff200, #ffe100 35%, #ffc800); color: #16163f; font: bold 23px/50px "Liberation Serif", serif; }
.s-body { flex: 1; padding-top: 70px; background: linear-gradient(#808080, #fff) 0 0 / 100% 8px no-repeat; color: #000; font-family: "DejaVu Sans Condensed", "Noto Sans", sans-serif; font-weight: bold; }
.s-body h1 { color: #0070c0; font-size: 60px; line-height: 70px; padding-left: 64px; }
.factors { display: grid; grid-template-columns: 250px 60px auto; padding: 36px 0 0 47px; font-size: 28px; line-height: 34px; white-space: nowrap; }
.hot { color: #f00000; }
.s-foot { height: 20px; text-align: right; padding-right: 4px; background: linear-gradient(90deg, #f7a31c 50%, #ffe100 50%); color: #14143c; font: bold 10px/20px "Liberation Sans", sans-serif; }
.edge-bar { width: 9px; display: flex; flex-direction: column; align-items: flex-start; overflow: hidden; padding-top: 2px; color: #777; background: #dcdcdc; }
.edge-bar > * { width: 14px; }
.edge-bar .track { padding-bottom: 50px; }
.edge-bar .handle { height: 15px; }
.jump { height: 52px; padding-top: 2px; background: #e6e6e6; }
.jump button { width: 14px; height: 16px; flex-direction: column; }
.notes { height: 33px; border-top: 1px solid #c4c4c4; padding-left: 10px; font-size: 13px; line-height: 31px; color: #555; }

/* Status bar */
.status { height: 20px; flex: none; display: flex; align-items: center; background: #f1f1f1; border-top: 1px solid #cfcfcf; padding: 0 0 1px 7px; color: #555; }
.book { margin: 0 15px; }
.status-right { margin-left: auto; display: flex; align-items: center; align-self: stretch; }
.words { gap: 4px; margin-right: 14px; }
.view { width: 36px; align-self: stretch; }
.on { background: #cbcbcb; }
.zoom-step { width: 14px; font-size: 14px; font-weight: bold; }
.zoom { appearance: none; width: 94px; height: 12px; margin: 0; background: linear-gradient(#999, #999) center / 100% 1px no-repeat; }
.zoom::-webkit-slider-thumb { appearance: none; width: 4px; height: 11px; background: #555; }
.pct { width: 42px; padding-left: 10px; }
.fit { width: 14px; }

/* Taskbar */
.taskbar { height: 34px; flex: none; display: flex; background: #1c1c1c; color: #fff; }
.taskbar > button { width: 46px; }
.current { background: #454545; }
.tray { margin-left: auto; display: flex; align-items: center; gap: 7px; padding-right: 17px; }
.lang { width: 20px; text-align: center; }
.clock { width: 64px; text-align: center; line-height: 17px; }
```
